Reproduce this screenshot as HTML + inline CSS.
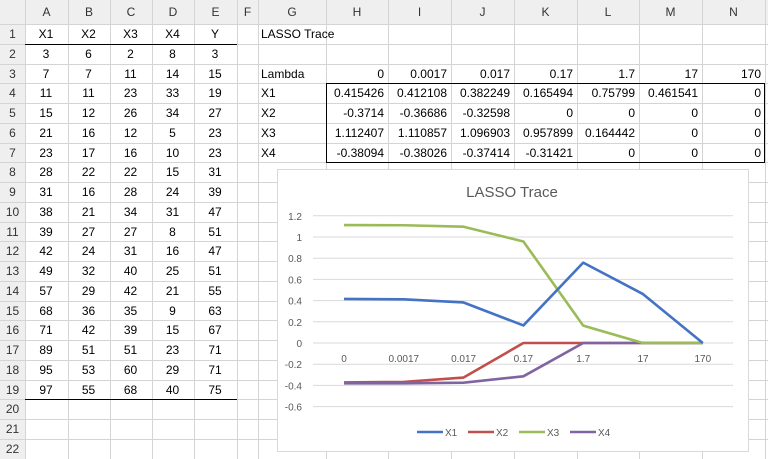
<!DOCTYPE html><html><head><style>
body{margin:0;width:768px;height:459px;overflow:hidden;background:#fff;font-family:"Liberation Sans",Arial,sans-serif;font-size:12px;color:#000;position:relative}
.c{position:absolute;height:20px;line-height:20px;white-space:nowrap}
</style></head><body>
<svg width="768" height="459" style="position:absolute;left:0;top:0" id="g"></svg>
<div id="t"></div>
<script>
var cols=[0,25,68,110,152,194,237,258,326,388,451,514,577,639,702,765,768];
var names=["","A","B","C","D","E","F","G","H","I","J","K","L","M","N",""];
var top0=24,rh=19.76;
var s='<rect x="0" y="0" width="768" height="24" fill="#efefef"/><rect x="0" y="0" width="25" height="459" fill="#efefef"/>';
for(var i=1;i<cols.length-1;i++){s+='<line x1="'+(cols[i]+.5)+'" y1="0" x2="'+(cols[i]+.5)+'" y2="459" stroke="#d4d4d4"/>';}
for(var r=0;r<=22;r++){var y=Math.round(top0+r*rh)+.5;s+='<line x1="0" y1="'+y+'" x2="768" y2="'+y+'" stroke="#d4d4d4"/>';}
s+='<line x1="25" y1="'+(Math.round(top0+rh)+.5)+'" x2="237" y2="'+(Math.round(top0+rh)+.5)+'" stroke="#000"/>';
s+='<line x1="25" y1="'+(Math.round(top0+19*rh)+.5)+'" x2="237" y2="'+(Math.round(top0+19*rh)+.5)+'" stroke="#000"/>';
s+='<rect x="326.5" y="'+(Math.round(top0+3*rh)+.5)+'" width="438" height="'+Math.round(4*rh)+'" fill="none" stroke="#000"/>';
// chart
s+='<rect x="277.5" y="169.5" width="471" height="282" fill="#fff" stroke="#d9d9d9"/>';
s+='<text x="512" y="197" text-anchor="middle" font-size="15" fill="#595959" font-family="Liberation Sans">LASSO Trace</text>';
var z=343,u=106;
for(var k=-3;k<=6;k++){var y=z-k*0.2*u;if(k!=0)s+='<line x1="313" x2="733" y1="'+y+'" y2="'+y+'" stroke="#d9d9d9"/>';
s+='<text x="302" y="'+(y+4)+'" text-anchor="end" font-size="10" fill="#595959">'+(k==0?'0':(k*0.2).toFixed(1).replace(/\.0$/,''))+'</text>';}
s+='<line x1="313" x2="733" y1="'+z+'" y2="'+z+'" stroke="#d9d9d9"/>';
var lab=["0","0.0017","0.017","0.17","1.7","17","170"];
for(var i=0;i<7;i++)s+='<text x="'+(344+i*59.8)+'" y="362" text-anchor="middle" font-size="10" fill="#595959">'+lab[i]+'</text>';
var data=[[0.415426,0.412108,0.382249,0.165494,0.75799,0.461541,0],[-0.3714,-0.36686,-0.32598,0,0,0,0],[1.112407,1.110857,1.096903,0.957899,0.164442,0,0],[-0.38094,-0.38026,-0.37414,-0.31421,0,0,0]];
var colr=["#4472c4","#c0504d","#9bbb59","#8064a2"];
var order=[1,3,2,0];
order.forEach(function(j){var p=data[j].map(function(v,i){return (344+i*59.8)+','+(z-v*u)}).join(' ');s+='<polyline points="'+p+'" fill="none" stroke="'+colr[j]+'" stroke-width="2.6" stroke-linejoin="round"/>';});
for(var j=0;j<4;j++){var x=417+j*51;s+='<line x1="'+x+'" x2="'+(x+26)+'" y1="432" y2="432" stroke="'+colr[j]+'" stroke-width="2.6"/><text x="'+(x+28)+'" y="436" font-size="10" fill="#595959">X'+(j+1)+'</text>';}
document.getElementById('g').innerHTML=s;
var h='';
function cell(c,r,txt,al){var x=cols[c],w=cols[c+1]-cols[c];var y=top0+(r-1)*rh;h+='<div class="c" style="left:'+(x+3)+'px;width:'+(w-7)+'px;top:'+y+'px;text-align:'+al+'">'+txt+'</div>';}
for(var i=1;i<=14;i++)h+='<div class="c" style="left:'+cols[i]+'px;width:'+(cols[i+1]-cols[i])+'px;top:2px;text-align:center;color:#333">'+names[i]+'</div>';
for(var r=1;r<=22;r++)h+='<div class="c" style="left:0;width:25px;top:'+(top0+(r-1)*rh)+'px;text-align:center;color:#333">'+r+'</div>';
var A=[["X1","X2","X3","X4","Y"],[3,6,2,8,3],[7,7,11,14,15],[11,11,23,33,19],[15,12,26,34,27],[21,16,12,5,23],[23,17,16,10,23],[28,22,22,15,31],[31,16,28,24,39],[38,21,34,31,47],[39,27,27,8,51],[42,24,31,16,47],[49,32,40,25,51],[57,29,42,21,55],[68,36,35,9,63],[71,42,39,15,67],[89,51,51,23,71],[95,53,60,29,71],[97,55,68,40,75]];
A.forEach(function(row,i){row.forEach(function(v,j){cell(j+1,i+1,v,'center');});});
cell(7,1,'LASSO Trace','left');cell(7,3,'Lambda','left');
lab.forEach(function(v,i){cell(8+i,3,v,'right');});
data.forEach(function(row,j){cell(7,4+j,'X'+(j+1),'left');row.forEach(function(v,i){cell(8+i,4+j,v,'right');});});
document.getElementById('t').innerHTML=h;
</script>
</body></html>
